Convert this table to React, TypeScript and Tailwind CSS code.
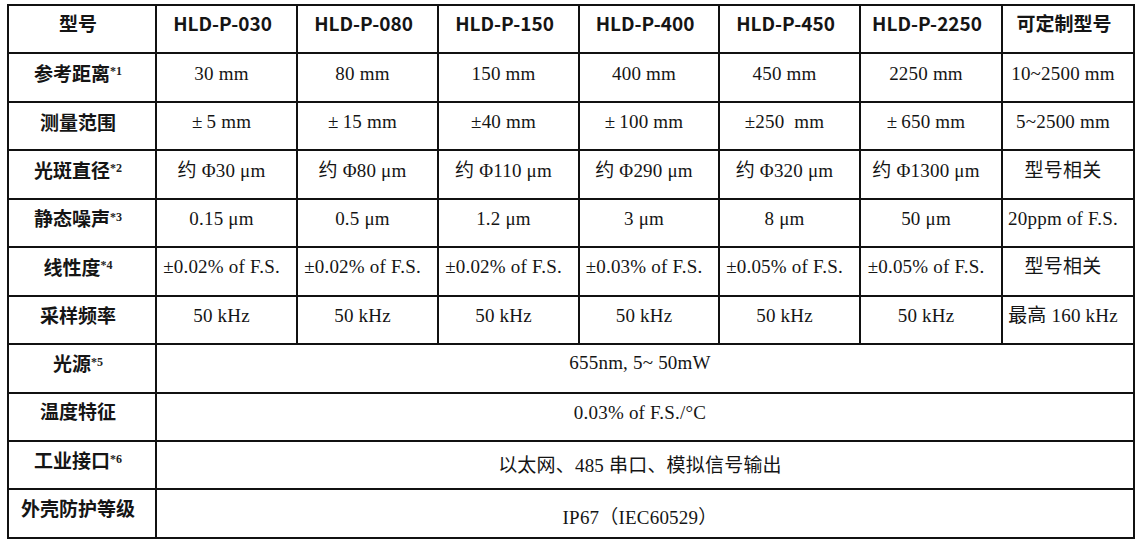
const head = ["型号", "HLD-P-030", "HLD-P-080", "HLD-P-150", "HLD-P-400", "HLD-P-450", "HLD-P-2250", "可定制型号"];

type Row = { label: string; sup?: string; cells: string[] };

const rows: Row[] = [
  { label: "参考距离", sup: "*1", cells: ["30 mm", "80 mm", "150 mm", "400 mm", "450 mm", "2250 mm", "10~2500 mm"] },
  { label: "测量范围", cells: ["±\u20095 mm", "±\u200915 mm", "±40 mm", "±\u2009100 mm", "±250  mm", "±\u2009650 mm", "5~2500 mm"] },
  { label: "光斑直径", sup: "*2", cells: ["约 Φ30 μm", "约 Φ80 μm", "约 Φ110 μm", "约 Φ290 μm", "约 Φ320 μm", "约 Φ1300 μm", "型号相关"] },
  { label: "静态噪声", sup: "*3", cells: ["0.15 μm", "0.5 μm", "1.2 μm", "3 μm", "8 μm", "50 μm", "20ppm of F.S."] },
  { label: "线性度", sup: "*4", cells: ["±0.02% of F.S.", "±0.02% of F.S.", "±0.02% of F.S.", "±0.03% of F.S.", "±0.05% of F.S.", "±0.05% of F.S.", "型号相关"] },
  { label: "采样频率", cells: ["50 kHz", "50 kHz", "50 kHz", "50 kHz", "50 kHz", "50 kHz", "最高 160 kHz"] },
];

const merged: (Row & { shift?: string })[] = [
  { label: "光源", sup: "*5", cells: ["655nm, 5~ 50mW"], shift: "pb-[11px]" },
  { label: "温度特征", cells: ["0.03% of F.S./°C"] },
  { label: "工业接口", sup: "*6", cells: ["以太网、485 串口、模拟信号输出"], shift: "pb-0" },
  { label: "外壳防护等级", cells: ["IP67（IEC60529）"], shift: "pt-[7px]" },
];

const cell = "h-[48.45px] flex items-center justify-center border-r-2 border-b-2 border-[#111] whitespace-pre leading-none";
const headFont = "font-['Noto_Sans_CJK_SC',sans-serif] font-bold text-[19px]";
const valFont = "font-['Liberation_Serif','Noto_Sans_CJK_SC',serif] text-[19px] tracking-[0.2px]";

function Label({ r, pad = "pb-[10px]" }: { r: Row; pad?: string }) {
  return (
    <div className={`${cell} ${headFont} pr-[8px] ${pad}`}>
      <span>{r.label}</span>
      {r.sup && (
        <span className="font-['Liberation_Serif',serif] font-bold text-[12px] self-start mt-[11px] text-[#222]">{r.sup}</span>
      )}
    </div>
  );
}

export default function App() {
  return (
    <div className="w-[1142px] h-[547px] bg-white pt-[4px] pl-[7px] text-[#151515]">
      <div className="grid grid-cols-[148px_141px_141px_141px_140px_141px_142px_132px] w-max border-l-2 border-t-2 border-[#111]">
        {head.map((h, i) => (
          <div key={h} className={`${cell} ${headFont} ${i === 0 || i === 7 ? "" : "text-[17.5px]"} pr-[8px] pb-[13px]`}>
            {h}
          </div>
        ))}
        {rows.map((r) => (
          <div key={r.label} className="contents">
            <Label r={r} />
            {r.cells.map((c, j) => (
              <div key={j} className={`${cell} ${valFont} pr-[10px] pb-[9px]`}>
                {c}
              </div>
            ))}
          </div>
        ))}
        {merged.map((r) => (
          <div key={r.label} className="contents">
            <Label r={r} pad="pb-[12px]" />
            <div className={`${cell} ${valFont} col-span-7 pr-[10px] ${r.shift ?? "pb-[9px]"}`}>{r.cells[0]}</div>
          </div>
        ))}
      </div>
    </div>
  );
}
